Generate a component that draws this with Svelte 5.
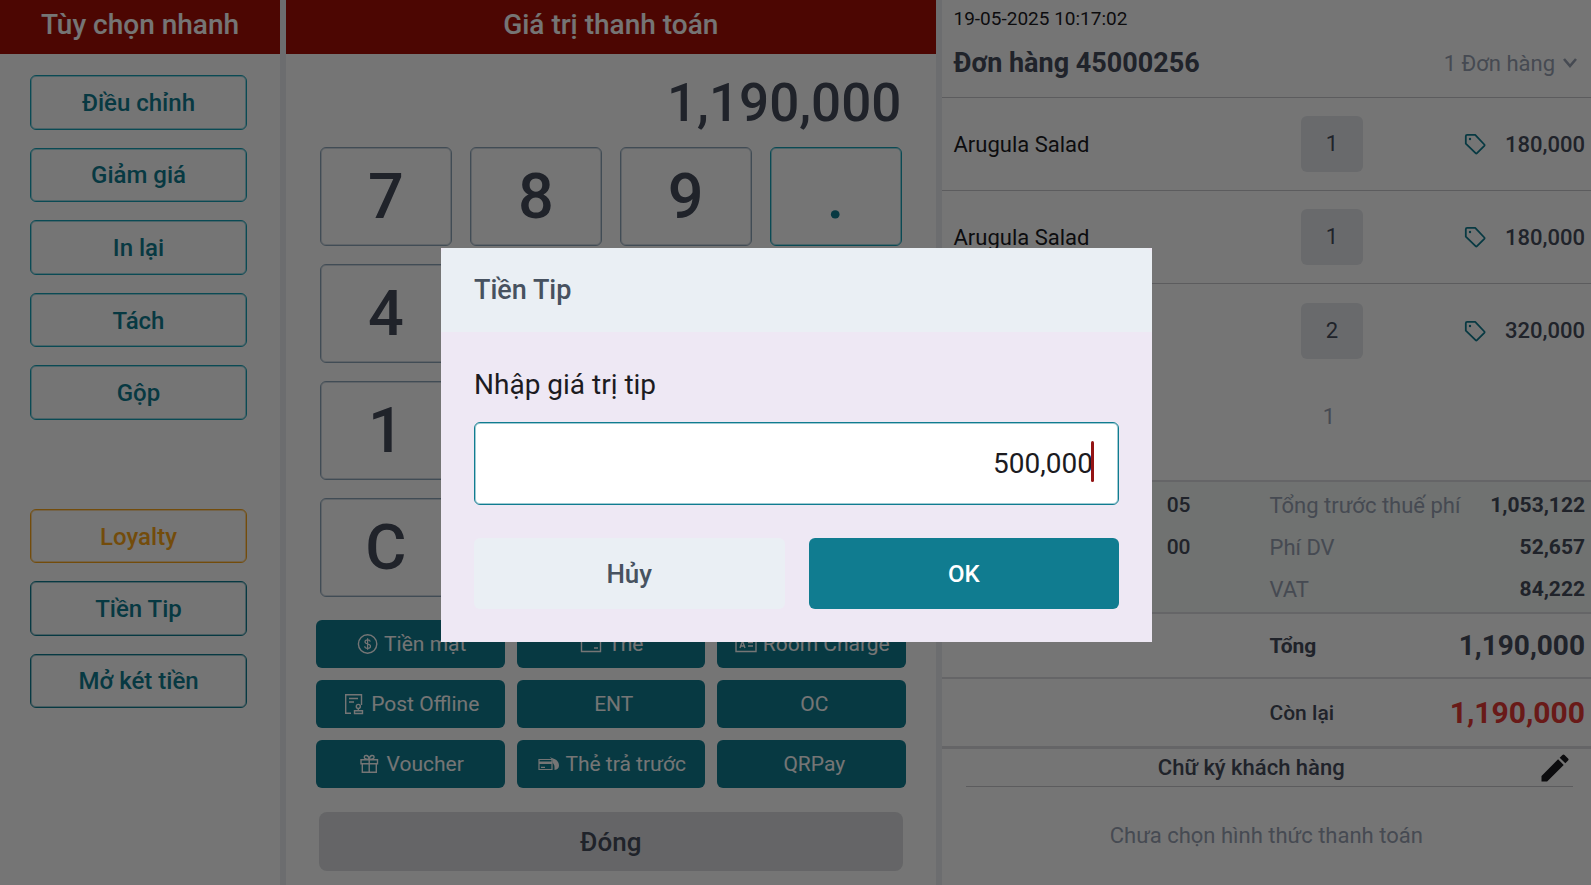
<script>
  let tip = $state("500,000");
  let open = $state(true);

  const quickOptions = ["Điều chỉnh", "Giảm giá", "In lại", "Tách", "Gộp"];
  const extraOptions = [
    { label: "Loyalty", kind: "loyalty" },
    { label: "Tiền Tip", kind: "solid" },
    { label: "Mở két tiền", kind: "solid" },
  ];
  const keyRows = [["7", "8", "9", "."], ["4"], ["1"], ["C"]];
  const payMethods = [
    { label: "Tiền mặt", icon: "cash" },
    { label: "Thẻ", icon: "card" },
    { label: "Room Charge", icon: "room" },
    { label: "Post Offline", icon: "post" },
    { label: "ENT" },
    { label: "OC" },
    { label: "Voucher", icon: "gift" },
    { label: "Thẻ trả trước", icon: "prepaid" },
    { label: "QRPay" },
  ];
  const items = [
    { name: "Arugula Salad", qty: 1, price: "180,000" },
    { name: "Arugula Salad", qty: 1, price: "180,000" },
    { name: "", qty: 2, price: "320,000", sub: 1 },
  ];
  const fees = [
    { info: "05", label: "Tổng trước thuế phí", value: "1,053,122" },
    { info: "00", label: "Phí DV", value: "52,657" },
    { info: "", label: "VAT", value: "84,222" },
  ];
</script>

{#snippet icon(name)}
  <svg class="icon" viewBox="0 0 22 22" fill="none" stroke="currentColor" stroke-width="1.4" aria-hidden="true">
    {#if name === "cash"}
      <circle cx="11.6" cy="11" r="9.2" />
      <path d="M14.3 8.6c-.2-1.1-1.2-1.8-2.7-1.8s-2.6.8-2.6 2c0 1.3 1 1.8 2.7 2.2s2.8.9 2.8 2.2-1.2 2.1-2.9 2.1-2.8-.8-2.9-2.1M11.6 5.3v11.4" stroke-width="1.2" />
    {:else if name === "card"}
      <path d="M1.5 3.5h19v15h-19zM1.5 8h19M14 15h4" />
    {:else if name === "room"}
      <path d="M1 3.5h20v15H1zM5 15l2.5-7L10 15M5.8 13h3.4M13 9.5h5M13 13h5" />
    {:else if name === "post"}
      <path d="M8 20.300H2.700V1.700h15.800V12M6 5.500h9M6 9h5" />
      <circle cx="15.3" cy="13.4" r="2" />
      <path d="M15.300 15.400v2.300M11.500 17.800h8v2.700h-8z" />
    {:else if name === "gift"}
      <path d="M2 6.700h16.500v4H2zM3.300 10.700h14v8.600h-14zM10.200 6.700v12.600M10.200 6.500C6 6.500 5 5.300 5.400 3.600S9.600 1.500 10.200 6.500C10.800 1.500 14.600 1.900 15 3.600s-.6 2.900-4.800 2.900" />
    {:else if name === "prepaid"}
      <path d="M2 6.500h13v10H2zM4 14.300h4" stroke-width="1.2" />
      <path d="M2 8.500h13v2.500H2z" fill="currentColor" stroke="none" />
      <path d="M12.500 4l5.500 2.300c2.500 1.200 4 3.400 4 6.300 0 2.500-1.500 4.300-4.500 4.300V14c0-2-1-3.300-2-4.500V6.800z" fill="currentColor" stroke="none" />
    {/if}
  </svg>
{/snippet}

<div class="pos">
  <section class="panel quick">
    <h2 class="bar">Tùy chọn nhanh</h2>
    <div class="options main-options">
      {#each quickOptions as label}
        <button class="option">{label}</button>
      {/each}
    </div>
    <div class="options extra-options">
      {#each extraOptions as o}
        <button class="option {o.kind}">{o.label}</button>
      {/each}
    </div>
  </section>

  <section class="panel payment">
    <h2 class="bar">Giá trị thanh toán</h2>
    <div class="amount">1,190,000</div>
    <div class="keypad">
      {#each keyRows as row}
        <div class="key-row">
          {#each row as k}
            <button class="key" class:dot={k === "."}>{k}</button>
          {/each}
        </div>
      {/each}
    </div>
    <div class="methods">
      {#each payMethods as m}
        <button class="method">
          {#if m.icon}{@render icon(m.icon)}{/if}
          <span>{m.label}</span>
        </button>
      {/each}
    </div>
    <button class="close">Đóng</button>
  </section>

  <section class="panel order">
    <header class="order-head">
      <div class="time">19-05-2025 10:17:02</div>
      <div class="order-title">
        <h1>Đơn hàng 45000256</h1>
        <button class="order-count">
          1 Đơn hàng
          <svg width="18" height="18" viewBox="0 0 18 18" fill="none" stroke="currentColor" stroke-width="2.6" aria-hidden="true"><path d="M3 5l6 7 6-7" /></svg>
        </button>
      </div>
    </header>
    <div class="items">
      {#each items as item}
        <div class="item">
          <span class="name">{item.name}</span>
          <span class="qty">{item.qty}</span>
          <span class="price">
            <svg width="22" height="22" viewBox="0 0 22 22" fill="none" stroke="currentColor" stroke-width="1.8" stroke-linejoin="round" aria-hidden="true">
              <path d="M1.800 3.200c0-.8.500-1.300 1.300-1.300h8.100L20.300 11.500a1 1 0 0 1 0 1.300L13 20.100a1 1 0 0 1-1.400 0L1.800 10.700z" />
              <circle cx="6" cy="6" r="1.2" fill="currentColor" stroke="none" />
            </svg>
            {item.price}
          </span>
        </div>
        {#if item.sub}
          <div class="item sub"><span></span><span class="sub-qty">{item.sub}</span></div>
        {/if}
      {/each}
    </div>
    <div class="fees">
      {#each fees as f}
        <div class="fee">
          <strong class="info">{f.info}</strong>
          <span>{f.label}</span>
          <strong>{f.value}</strong>
        </div>
      {/each}
    </div>
    <div class="sum total"><b>Tổng</b><strong>1,190,000</strong></div>
    <div class="sum remain"><span>Còn lại</span><strong>1,190,000</strong></div>
    <div class="signature">
      <span>Chữ ký khách hàng</span>
      <button aria-label="Chữ ký khách hàng">
        <svg width="36" height="36" viewBox="0 0 24 24" fill="currentColor" aria-hidden="true"><path d="M3 17.250V21h3.750L17.810 9.940l-3.750-3.750L3 17.250zM20.710 7.040a1 1 0 0 0 0-1.410l-2.340-2.340a1 1 0 0 0-1.410 0l-1.830 1.830 3.750 3.750 1.830-1.830z" /></svg>
      </button>
    </div>
    <p class="empty">Chưa chọn hình thức thanh toán</p>
  </section>
</div>

{#if open}
  <div class="overlay">
    <div class="dialog" role="dialog" aria-modal="true" aria-labelledby="tip-title">
      <h2 id="tip-title">Tiền Tip</h2>
      <div class="dialog-body">
        <label for="tip">Nhập giá trị tip</label>
        <div class="field">
          <input id="tip" type="text" inputmode="numeric" bind:value={tip} />
          <span class="caret"></span>
        </div>
        <div class="actions">
          <button class="cancel" onclick={() => (open = false)}>Hủy</button>
          <button class="ok" onclick={() => (open = false)}>OK</button>
        </div>
      </div>
    </div>
  </div>
{/if}

<style>
  :global(body) { background: #fff; font-family: Roboto, "Noto Sans", sans-serif; }
  * { box-sizing: border-box; }
  h1, h2, p { margin: 0; }
  button { font-family: inherit; cursor: pointer; }

  .pos {
    display: grid; grid-template-columns: 280px 1fr 1fr; gap: 6px;
    min-height: 100vh; background: #ebedf2; color: #464d5c;
  }
  .panel { background: #fff; display: flex; flex-direction: column; }
  .bar {
    height: 54px; line-height: 50px; background: #a60f06; color: #fff;
    font-size: 28px; font-weight: 500; text-align: center;
  }

  .options { display: grid; gap: 18px; padding: 0 33px 0 30px; grid-auto-rows: 1fr; }
  .main-options { margin-top: 21px; height: 345px; }
  .extra-options { margin-top: 89px; height: 199px; }
  .option {
    --line: #17a2b8;
    background: none; border: 1px solid var(--line); border-radius: 6px; padding: 1px 0 0;
    box-shadow: inset 0 0 0 1px color-mix(in srgb, var(--line) 40%, transparent);
    font-size: 24px; font-weight: 500; color: #107c90;
  }
  .option.solid { --line: #107c90; }
  .option.loyalty { --line: #faa61a; color: #faa61a; }

  .amount {
    height: 93px; line-height: 98px; padding-right: 34px; text-align: right;
    font-size: 53px; font-weight: 500;
  }
  .keypad { display: grid; gap: 18px; padding: 0 34px; }
  .key-row { display: grid; grid-template-columns: repeat(4, 1fr); gap: 18px; }
  .key {
    --line: #8fa6ba;
    height: 99px; background: none; border: 1px solid var(--line); border-radius: 6px;
    box-shadow: inset 0 0 0 1px color-mix(in srgb, var(--line) 40%, transparent);
    font-size: 63px; font-weight: 500; color: #464d5c; padding: 0;
  }
  .key.dot { --line: #17a2b8; color: #107c90; }
  .methods {
    display: grid; grid-template-columns: repeat(3, 1fr); gap: 12px;
    padding: 0 30px; margin-top: 23px;
  }
  .method {
    height: 48px; border: 0; border-radius: 6px; background: #107c90; color: #fff;
    font-size: 21px; display: flex; align-items: center; justify-content: center;
    padding: 0; white-space: nowrap;
  }
  .method span { margin-left: 6px; }
  .icon { width: 22px; height: 22px; margin-left: 2px; }
  .close {
    height: 59px; margin: 24px 33px 0; border: 0; border-radius: 8px; padding: 0;
    background: #dcdde0; color: #464d5c; font-size: 26px; font-weight: 500;
  }

  .order-head { height: 98px; padding: 8px 12px 0; border-bottom: 1px solid #c8c9cc; }
  .time { font-size: 19px; line-height: 22px; color: #1c1b1f; }
  .order-title { display: flex; justify-content: space-between; align-items: center; margin-top: 14px; }
  h1 { font-size: 27px; line-height: 38px; font-weight: 700; }
  .order-count {
    display: flex; align-items: center; gap: 6px; border: 0; background: none;
    padding: 0; font-size: 22px; color: #98a2b3;
  }
  .items { height: 382px; }
  .item {
    display: grid; grid-template-columns: 1fr 62px 222px; align-items: center;
    height: 93px; padding: 0 6px 0 12px; border-bottom: 1px solid #c8c9cc; font-size: 22px;
  }
  .item:nth-child(n + 3) { border: 0; }
  .name { color: #1c1b1f; }
  .qty {
    height: 56px; line-height: 56px; text-align: center; border-radius: 6px; background: #e5e7eb;
  }
  .price {
    display: flex; align-items: center; justify-content: flex-end; gap: 19px; font-weight: 500;
  }
  .price svg { color: #107c90; }
  .sub { height: 78px; color: #98a2b3; }
  .sub-qty { text-align: center; padding-right: 6px; }

  .fees {
    background: #f3f8f6; border-top: 2px solid #dcdde0; border-bottom: 2px solid #dcdde0;
    padding: 2px 6px; font-size: 21px;
  }
  .fee { display: grid; grid-template-columns: 243px 79px 1fr auto; height: 42px; align-items: center; }
  .fee span { grid-column: 3; color: #98a2b3; font-size: 22px; }
  .fee strong { font-weight: 700; }
  .fee .info { text-align: right; font-weight: 500; }
  .sum {
    display: grid; grid-template-columns: auto 1fr; align-items: center;
    padding: 0 6px 0 328px; font-size: 21px; border-bottom: 2px solid #dcdde0;
  }
  .sum span { font-weight: 500; }
  .sum strong { text-align: right; font-size: 28px; }
  .total { height: 65px; }
  .remain { height: 70px; border-bottom-width: 3px; }
  .remain strong { color: #e53935; font-size: 30px; }
  .signature {
    display: grid; grid-template-columns: 1fr 36px; align-items: center; height: 38px;
    margin: 0 18px 0 24px; border-bottom: 1px solid #c8c9cc;
    font-size: 22px; font-weight: 500; text-align: center;
  }
  .signature button { border: 0; background: none; padding: 0; height: 36px; color: #1c1b1f; }
  .empty { margin-top: 35px; line-height: 28px; text-align: center; font-size: 22px; color: #98a2b3; }

  .overlay {
    position: fixed; inset: 0; display: flex; align-items: center; justify-content: center;
    padding: 4px 0 0 2px; background: rgba(0, 0, 0, 0.54);
  }
  .dialog { width: 711px; max-width: 90vw; background: #eee8f4; }
  .dialog h2 {
    height: 84px; line-height: 84px; padding: 0 33px; background: #eaeff4;
    border-radius: 6px 6px 0 0; font-size: 27px; font-weight: 500; color: #475260;
  }
  .dialog-body { padding: 35px 33px 33px; }
  label { display: block; font-size: 28px; line-height: 36px; color: #1c1b1f; }
  .field { position: relative; margin-top: 19px; }
  input {
    display: block; width: 100%; height: 83px; padding: 0 25px; text-align: right;
    border: 1px solid #107c90; border-radius: 6px; background: #fff; outline: none;
    box-shadow: inset 0 0 0 1px rgba(16, 124, 144, 0.4);
    font-family: inherit; font-size: 28px; color: #1c1b1f;
  }
  .caret {
    position: absolute; right: 25px; top: 19px; width: 3px; height: 41px;
    border-radius: 2px; background: #931414;
  }
  .actions { display: grid; grid-template-columns: 1fr 1fr; gap: 24px; margin-top: 33px; }
  .actions button {
    height: 71px; padding: 2px 0 0; border: 0; border-radius: 6px; font-weight: 500; font-size: 26px;
  }
  .cancel { background: #eaeff4; color: #475260; }
  .actions .ok { background: #107c90; color: #fff; font-size: 24px; }
</style>
